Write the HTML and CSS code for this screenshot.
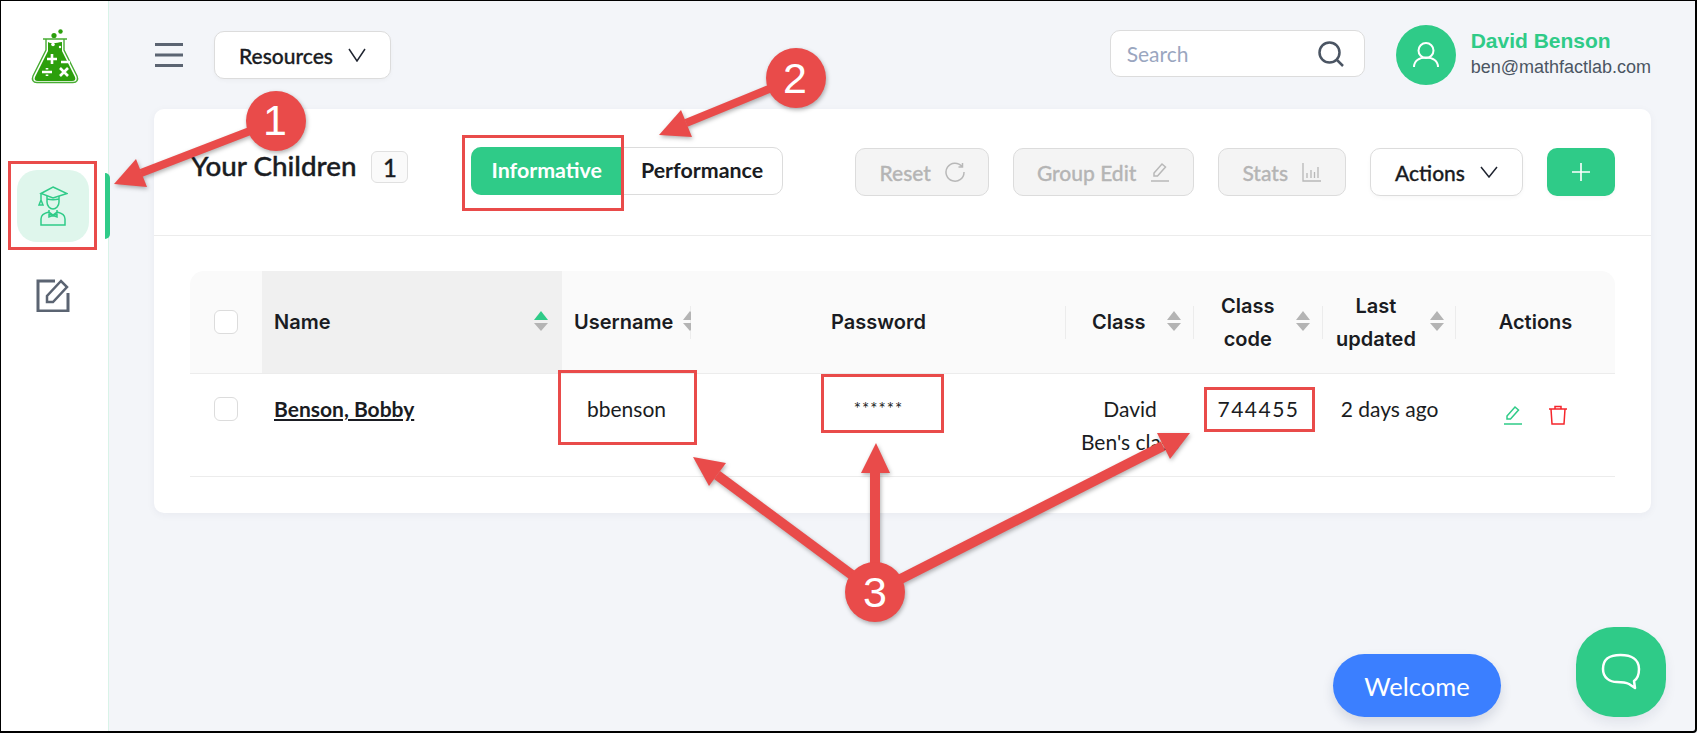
FILE: index.html
```html
<!DOCTYPE html>
<html lang="en">
<head>
  <meta charset="UTF-8">
  <title>Your Children</title>
  <link rel="stylesheet" href="styles.css">
</head>
<body>
  <div class="app">
    <!-- Sidebar -->
    <aside class="sidebar">
      <svg class="logo" width="52" height="56" viewBox="0 0 52 56">
        <circle cx="23" cy="7.5" r="2.6" fill="#2c9f0c"/>
        <circle cx="29.5" cy="3.5" r="2.2" fill="#2c9f0c"/>
        <path d="M12 11h24M15 11v11L2 48c-1.5 3.5 0 6.5 4 6.5h36c4 0 5.5-3 4-6.5L33 22V11" fill="none" stroke="#48ad33" stroke-width="1.4"/>
        <path d="M17 14c6 3 9 0 14 0v9l13 26c1 2.500 0 4-3 4H7c-3 0-4-1.500-3-4l13-26z" fill="#2c9f0c"/>
        <circle cx="22" cy="16.500" r="1.800" fill="#fff"/>
        <circle cx="29" cy="19" r="1.200" fill="#fff"/>
        <path d="M16 31h10M21 26v10M30 34h9M11 44h10M16 40v1.500M16 46.500V48M29 40l8 8M37 40l-8 8" stroke="#fff" stroke-width="2.600" fill="none"/>
      </svg>
      <nav class="side-nav">
        <a class="side-item active">
          <svg width="30" height="40" viewBox="0 0 30 40" fill="none" stroke="#2fcb88" stroke-width="1.500">
            <path d="M15 1 29 7.500 15 12 3 7.500z"/>
            <path d="M9 10v6c0 4 3 7 6 7s6-3 6-7v-6M9 13c4 1 8 1 12 0"/>
            <path d="M3 8v6M3 14l-2 5h4z"/>
            <path d="M11 24v2c-5 1-8 3-8 7v6h24v-6c0-4-3-6-8-7v-2M11 26l4 3 4-3M11 28l4 1.500-4 1.500zM19 28l-4 1.500 4 1.500z"/>
          </svg>
        </a>
        <a class="side-item">
          <svg width="34" height="34" viewBox="0 0 34 34" fill="none" stroke="#5b6472" stroke-width="3">
            <path d="M19 3H2v30h30V15"/>
            <path d="M11 24v-6L25 3l6 6-14 15z" stroke-width="2.500"/>
          </svg>
        </a>
      </nav>
    </aside>

    <main class="main">
      <!-- Top bar -->
      <header class="topbar">
        <svg class="burger" width="28" height="24" viewBox="0 0 28 24" stroke="#5b6472" stroke-width="3">
          <path d="M0 1.500h28M0 12h28M0 22.500h28"/>
        </svg>
        <button class="btn resources">Resources
          <svg class="chev" width="18" height="14" viewBox="0 0 18 14" fill="none" stroke="#1f2430" stroke-width="1.500"><path d="M1 1l8 12 8-12"/></svg>
        </button>
        <div class="search">
          <span>Search</span>
          <svg width="26" height="26" viewBox="0 0 26 26" fill="none" stroke="#4b5563" stroke-width="2.500">
            <circle cx="11.500" cy="11.500" r="10"/><path d="M18.500 18.500 25 25"/>
          </svg>
        </div>
        <div class="avatar">
          <svg width="26" height="26" viewBox="0 0 26 26" fill="none" stroke="#fff" stroke-width="2">
            <circle cx="13" cy="8.500" r="7.500"/><path d="M1 25c0-6 5-9.500 12-9.500S25 19 25 25"/>
          </svg>
        </div>
        <div class="user">
          <div class="user-name">David Benson</div>
          <div class="user-mail">ben@mathfactlab.com</div>
        </div>
      </header>

      <!-- Children card -->
      <section class="card">
        <div class="card-head">
          <div class="title-group">
            <h1>Your Children</h1>
            <span class="count">1</span>
          </div>
          <div class="toggle">
            <span class="on">Informative</span>
            <span>Performance</span>
          </div>
          <div class="tools">
            <button class="btn disabled">Reset
              <svg width="20" height="20" viewBox="0 0 20 20" fill="none" stroke="#b8b8b8" stroke-width="1.500"><path d="M17 4.500A9 9 0 1 0 19 10M17.500 1v4h-4"/></svg>
            </button>
            <button class="btn disabled">Group Edit
              <svg width="20" height="20" viewBox="0 0 20 20" fill="none" stroke="#b8b8b8" stroke-width="1.500"><path d="M4 14v-3L12 2l3.500 3-8 9zM1 19h18"/></svg>
            </button>
            <button class="btn disabled">Stats
              <svg width="20" height="20" viewBox="0 0 20 20" fill="none" stroke="#b8b8b8" stroke-width="1.300"><path d="M1 1v18h18M5 16v-5M9 16V8M12.500 16v-6M16 16V5"/></svg>
            </button>
            <button class="btn">Actions
              <svg class="chev" width="18" height="12" viewBox="0 0 18 12" fill="none" stroke="#1f2430" stroke-width="1.500"><path d="M1 1l8 10 8-10"/></svg>
            </button>
            <button class="btn add">
              <svg width="18" height="18" viewBox="0 0 18 18" stroke="#fff" stroke-width="1.600"><path d="M9 0v18M0 9h18"/></svg>
            </button>
          </div>
        </div>

        <div class="card-body">
          <table class="kids">
            <colgroup>
              <col class="c-check"><col class="c-name"><col class="c-user"><col class="c-pass">
              <col class="c-class"><col class="c-code"><col class="c-upd"><col class="c-act">
            </colgroup>
            <thead>
              <tr>
                <th><div class="check"></div></th>
                <th class="sorted">
                  <div class="th-in name-in">Name
                    <svg class="sort" width="14" height="20" viewBox="0 0 14 20"><path d="M7 0l7 9H0z" fill="#2fcb88"/><path d="M0 12h14l-7 8z" fill="#b4b4b4"/></svg>
                  </div>
                </th>
                <th class="sep">
                  <div class="th-in user-in">Username
                    <svg class="sort" width="14" height="20" viewBox="0 0 14 20"><path d="M7 0l7 9H0zM0 12h14l-7 8z" fill="#b4b4b4"/></svg>
                  </div>
                </th>
                <th class="sep center">Password</th>
                <th class="sep">
                  <div class="th-in class-in">Class
                    <svg class="sort" width="14" height="20" viewBox="0 0 14 20"><path d="M7 0l7 9H0zM0 12h14l-7 8z" fill="#b4b4b4"/></svg>
                  </div>
                </th>
                <th class="sep">
                  <div class="th-in code-in"><span class="two-line">Class<br>code</span>
                    <svg class="sort" width="14" height="20" viewBox="0 0 14 20"><path d="M7 0l7 9H0zM0 12h14l-7 8z" fill="#b4b4b4"/></svg>
                  </div>
                </th>
                <th class="sep">
                  <div class="th-in upd-in"><span class="two-line">Last<br>updated</span>
                    <svg class="sort" width="14" height="20" viewBox="0 0 14 20"><path d="M7 0l7 9H0zM0 12h14l-7 8z" fill="#b4b4b4"/></svg>
                  </div>
                </th>
                <th class="center">Actions</th>
              </tr>
            </thead>
            <tbody>
              <tr>
                <td><div class="check row-check"></div></td>
                <td class="name-cell"><a>Benson, Bobby</a></td>
                <td class="center">bbenson</td>
                <td class="center pass">******</td>
                <td class="center">David<br>Ben's class</td>
                <td class="center code">744455</td>
                <td class="center">2 days ago</td>
                <td class="center">
                  <div class="row-actions">
                    <svg width="20" height="20" viewBox="0 0 20 20" fill="none" stroke="#2fcb88" stroke-width="1.500"><path d="M4 14v-3L12 2l3.500 3-8 9zM1 19h18"/></svg>
                    <svg width="20" height="20" viewBox="0 0 20 20" fill="none" stroke="#f5262c" stroke-width="1.500"><path d="M1 4h18M7 4V1.500h6V4M3 4l1 15h12l1-15"/></svg>
                  </div>
                </td>
              </tr>
            </tbody>
          </table>
        </div>
      </section>
    </main>
  </div>

  <!-- Floating buttons -->
  <div class="welcome">Welcome</div>
  <div class="chat">
    <svg width="40" height="38" viewBox="0 0 40 38" fill="none" stroke="#fff" stroke-width="2.500" stroke-linejoin="round">
      <path d="M19.500 2C9 2 2 5 2 16c0 9 7 13 14 13 6 0 9 .500 12 2l6 4-1-7c3-2 5-6 5-12C38 6 30 2 19.500 2z"/>
    </svg>
  </div>

  <!-- Callouts drawn over the screenshot -->
  <svg class="callouts" width="1697" height="733" viewBox="0 0 1697 733">
    <g class="marks">
      <rect x="9.500" y="162.500" width="86" height="86"/>
      <rect x="463.500" y="136.500" width="159" height="73"/>
      <rect x="559.500" y="371.500" width="136" height="72"/>
      <rect x="822.500" y="375.500" width="120" height="56"/>
      <rect x="1205.500" y="388.500" width="108" height="42"/>
    </g>
    <g class="arrows">
      <line x1="276" y1="121" x2="141" y2="173" stroke-width="8"/>
      <polygon points="114,184 136,159 147,187"/>
      <line x1="796" y1="78" x2="686" y2="123" stroke-width="8"/>
      <polygon points="659,135 681,110 692,137"/>
      <line x1="875" y1="592" x2="717" y2="475" stroke-width="10"/>
      <polygon points="693,457 726,463 709,486"/>
      <line x1="875" y1="592" x2="875" y2="473" stroke-width="10"/>
      <polygon points="876,443 861,473 890,473"/>
      <line x1="875" y1="592" x2="1163" y2="446" stroke-width="10"/>
      <polygon points="1190,433 1157,433 1170,459"/>
      <circle cx="276" cy="121" r="30"/>
      <circle cx="796" cy="78" r="30"/>
      <circle cx="875" cy="592" r="30"/>
    </g>
    <g class="nums">
      <text x="275" y="135">1</text>
      <text x="795" y="93">2</text>
      <text x="875" y="607">3</text>
    </g>
  </svg>
</body>
</html>
```
FILE: styles.css
```css
/* General */
* {
  box-sizing: border-box;
}

html, body {
  margin: 0;
  height: 100%;
  overflow: hidden;
}

body {
  position: relative;
  font-family: 'Lato', sans-serif;
  color: #1a1c22;
  background: #f3f5f9;
}

.app {
  display: flex;
  height: 733px;
  border-style: solid;
  border-color: #000;
  border-width: 1px 2px 2px 1px;
  border-bottom-right-radius: 4px;
}

/* Sidebar */
.sidebar {
  width: 108px;
  flex-shrink: 0;
  background: #fff;
  border-right: 1px solid #d9f3e8;
  padding-top: 27px;
}

.logo {
  display: block;
  margin-left: 30px;
}

.side-nav {
  margin-top: 86px;
  display: flex;
  flex-direction: column;
  gap: 17px;
}

.side-item {
  position: relative;
  width: 72px;
  height: 72px;
  margin-left: 16px;
  display: flex;
  align-items: center;
  justify-content: center;
  border-radius: 20px;
}

.side-item.active {
  background: #dff6ec;
}

.side-item.active::after {
  content: '';
  position: absolute;
  left: 88px;
  top: 3px;
  width: 5px;
  height: 66px;
  background: #2fcb88;
  border-radius: 0 6px 6px 0;
}

/* Main */
.main {
  flex: 1;
  padding: 24px 44px 0 45px;
}

.topbar {
  display: flex;
  align-items: center;
  height: 60px;
  margin-bottom: 24px;
}

.burger {
  margin-left: 1px;
}

.btn {
  display: inline-flex;
  align-items: center;
  justify-content: center;
  gap: 15px;
  height: 48px;
  padding: 0 24px;
  font-family: 'Lato', sans-serif;
  font-size: 21px;
  font-weight: 500;
  -webkit-text-stroke: 0.3px;
  color: #1a1c22;
  background: #fff;
  border: 1px solid #dcdcdc;
  border-radius: 10px;
  box-shadow: 0 2px 4px rgba(0, 0, 0, 0.03);
}

.resources {
  margin-left: 31px;
}

.search {
  margin-left: auto;
  margin-top: -3px;
  width: 255px;
  height: 47px;
  display: flex;
  align-items: center;
  justify-content: space-between;
  padding: 0 20px 0 16px;
  background: #fff;
  border: 1px solid #dcdcdc;
  border-radius: 10px;
  font-size: 21px;
  color: #9aa6bf;
}

.avatar {
  width: 60px;
  height: 60px;
  margin-left: 31px;
  flex-shrink: 0;
  border-radius: 50%;
  background: #2fcb88;
  display: flex;
  align-items: center;
  justify-content: center;
}

.user {
  margin-left: 15px;
  margin-top: -2px;
  font-family: 'Liberation Sans', sans-serif;
}

.user-name {
  font-size: 21px;
  font-weight: 700;
  color: #2fcb88;
  line-height: 26px;
}

.user-mail {
  font-size: 18px;
  color: #4b5563;
  line-height: 26px;
}

/* Card */
.card {
  background: #fff;
  border-radius: 10px;
  box-shadow: 0 2px 8px rgba(30, 40, 80, 0.05);
}

.card-head {
  display: flex;
  align-items: flex-start;
  height: 127px;
  padding: 38px 36px 0;
  border-bottom: 1px solid #ececec;
}

.title-group {
  display: flex;
  align-items: flex-start;
  gap: 15px;
  margin-top: 4px;
}

.title-group h1 {
  margin: -2px 0 0 1px;
  font-size: 27.8px;
  line-height: 34px;
  font-weight: 500;
  -webkit-text-stroke: 0.4px;
}

.count {
  width: 37px;
  height: 32px;
  display: flex;
  align-items: center;
  justify-content: center;
  font-size: 24px;
  font-weight: 500;
  -webkit-text-stroke: 0.3px;
  background: #fafafa;
  border: 1px solid #e0e0e0;
  border-radius: 6px;
}

.toggle {
  display: flex;
  height: 48px;
  margin-left: 63px;
  font-size: 21.4px;
  font-weight: 700;
  border: 1px solid #dcdcdc;
  border-radius: 10px;
}

.toggle span {
  display: flex;
  align-items: center;
  padding: 0 19px 2px;
}

.toggle .on {
  margin: -1px 0 -1px -1px;
  padding: 0 20px 2px;
  color: #fff;
  background: #2fcb88;
  border-radius: 10px 0 0 10px;
}

.tools {
  margin-left: auto;
  margin-top: 1px;
  display: flex;
  gap: 24px;
}

.btn.disabled {
  color: #b5b5b5;
  background: #f4f4f4;
  box-shadow: none;
  gap: 14px;
  padding: 0 23px;
}

.btn.add {
  width: 68px;
  padding: 0;
  border: 0;
  background: #2fcb88;
}

/* Table */
.card-body {
  padding: 35px 36px 36px;
}

.kids {
  width: 1425px;
  table-layout: fixed;
  border-collapse: separate;
  border-spacing: 0;
}

.c-check { width: 72px; }
.c-name { width: 300px; }
.c-user { width: 129px; }
.c-pass { width: 375px; }
.c-class { width: 128px; }
.c-code { width: 129px; }
.c-upd { width: 133px; }
.c-act { width: 159px; }

.kids th {
  height: 103px;
  padding: 0;
  font-family: 'Inter', sans-serif;
  font-size: 20px;
  font-weight: 600;
  line-height: 33px;
  background-color: #fafafa;
  border-bottom: 1px solid #ececec;
  text-align: left;
  overflow: hidden;
}

.kids th:first-child {
  border-top-left-radius: 14px;
  padding-left: 24px;
}

.kids th:last-child {
  border-top-right-radius: 14px;
}

.kids th.sorted {
  background-color: #f0f0f0;
}

.kids th.sep {
  background-image: linear-gradient(#ececec, #ececec);
  background-repeat: no-repeat;
  background-position: right center;
  background-size: 1px 33px;
}

.kids th.center,
.kids td.center {
  text-align: center;
}

.th-in {
  display: flex;
  align-items: center;
}

.two-line {
  margin-top: 2px;
}

.sort {
  flex-shrink: 0;
  margin-bottom: 2px;
}

.name-in {
  justify-content: space-between;
  padding: 0 14px 0 12px;
}

.user-in {
  gap: 10px;
  padding-left: 12px;
}

.class-in {
  gap: 22px;
  padding-left: 26px;
}

.code-in {
  gap: 22px;
  padding-left: 27px;
  text-align: center;
}

.upd-in {
  gap: 14px;
  padding-left: 13px;
  text-align: center;
}

.check {
  width: 24px;
  height: 24px;
  background: #fff;
  border: 1px solid #dcdcdc;
  border-radius: 6px;
}

.kids td {
  height: 103px;
  padding: 18px 0 0;
  vertical-align: top;
  font-size: 21px;
  line-height: 33px;
  border-bottom: 1px solid #ececec;
}

.row-check {
  margin: 5px 0 0 24px;
}

.name-cell {
  padding-left: 12px !important;
  font-weight: 700;
}

.name-cell a {
  text-decoration: underline;
  color: #1a1c22;
}

.pass {
  font-size: 17px !important;
  letter-spacing: 1px;
}

.code {
  letter-spacing: 1.5px;
}

.row-actions {
  display: flex;
  justify-content: center;
  gap: 25px;
  margin-top: 13px;
}

/* Floating buttons */
.welcome {
  position: absolute;
  left: 1333px;
  top: 654px;
  width: 168px;
  height: 63px;
  display: flex;
  align-items: center;
  justify-content: center;
  font-size: 25.5px;
  color: #fff;
  background: #3b7fff;
  border-radius: 32px;
  box-shadow: 0 6px 12px rgba(30, 40, 80, 0.14);
}

.chat {
  position: absolute;
  left: 1576px;
  top: 627px;
  width: 90px;
  height: 90px;
  display: flex;
  align-items: center;
  justify-content: center;
  background: #2fcb88;
  border-radius: 42%;
  box-shadow: 0 6px 12px rgba(30, 40, 80, 0.08);
}

/* Callouts */
.callouts {
  position: absolute;
  left: 0;
  top: 0;
  pointer-events: none;
}

.marks rect {
  fill: none;
  stroke: #e94b4a;
  stroke-width: 3;
}

.arrows {
  filter: drop-shadow(1px 2px 2px rgba(0, 0, 0, 0.3));
}

.arrows line {
  stroke: #e94b4a;
}

.arrows polygon,
.arrows circle {
  fill: #e94b4a;
}

.nums text {
  font-family: 'Liberation Sans', sans-serif;
  font-size: 43px;
  fill: #fff;
  text-anchor: middle;
}
```
